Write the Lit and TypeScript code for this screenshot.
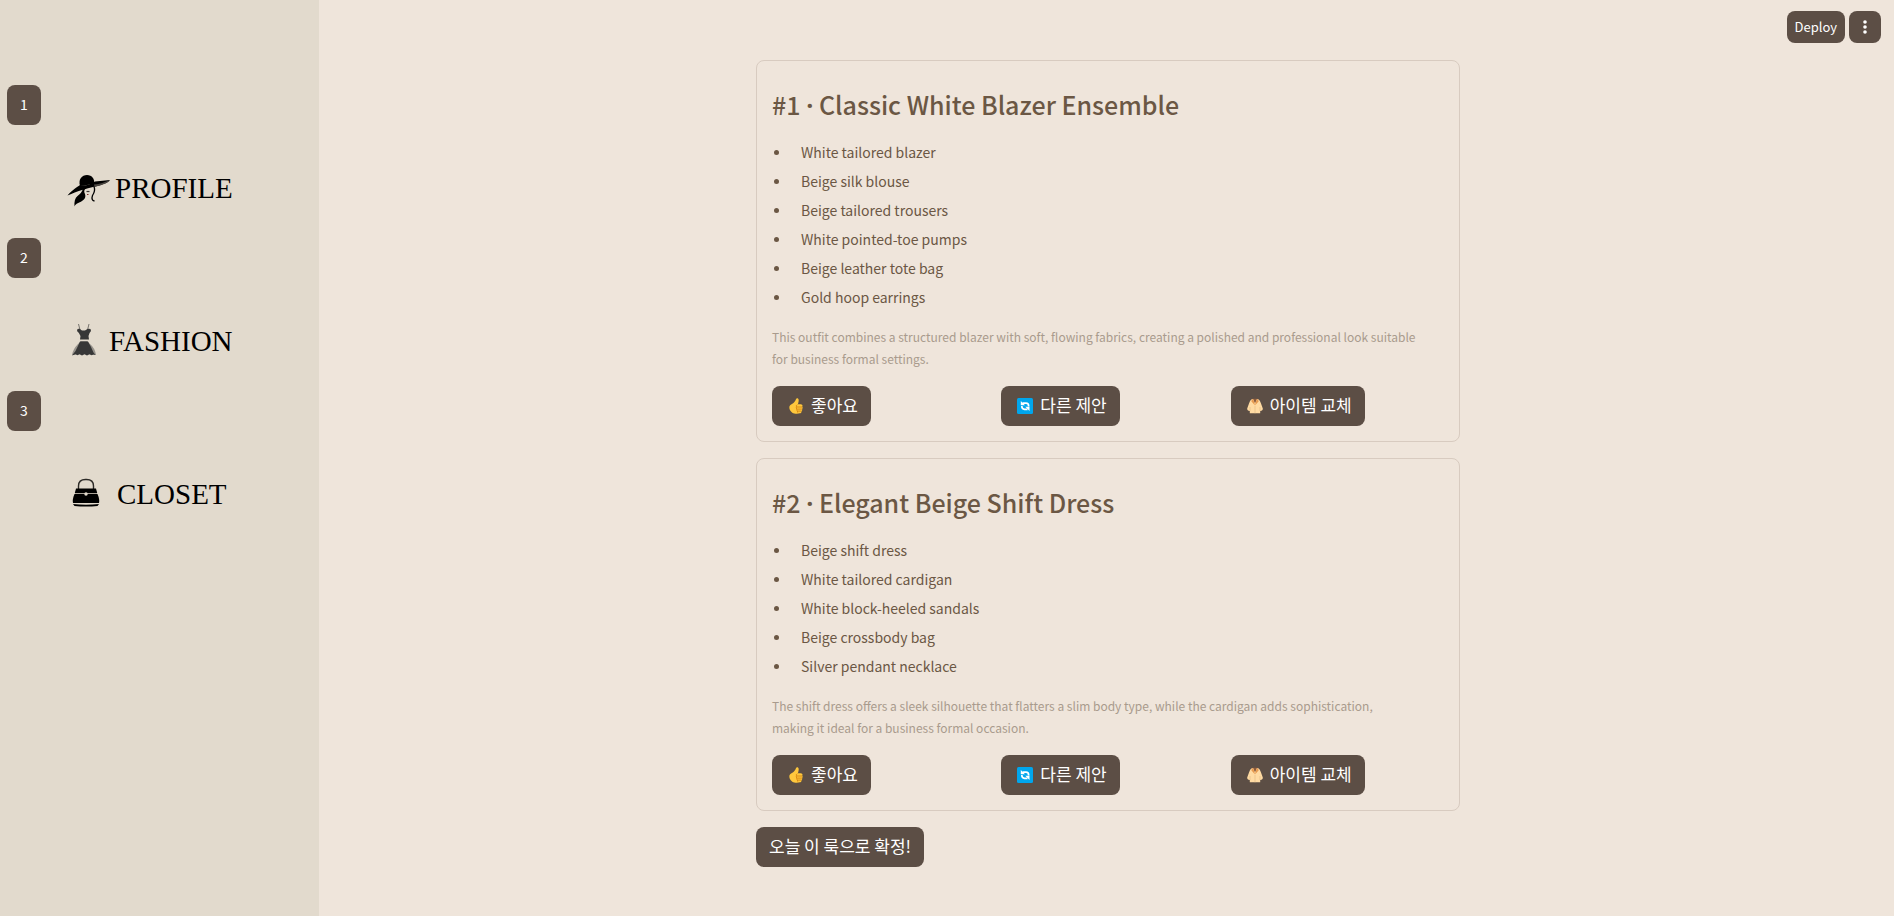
import { LitElement, html, css, svg } from "lit";
import { customElement, property } from "lit/decorators.js";

interface Outfit {
  rank: string;
  title: string;
  items: string[];
  note: string;
}

const outfits: Outfit[] = [
  {
    rank: "#1",
    title: "Classic White Blazer Ensemble",
    items: [
      "White tailored blazer",
      "Beige silk blouse",
      "Beige tailored trousers",
      "White pointed-toe pumps",
      "Beige leather tote bag",
      "Gold hoop earrings",
    ],
    note: "This outfit combines a structured blazer with soft, flowing fabrics, creating a polished and professional look suitable\nfor business formal settings.",
  },
  {
    rank: "#2",
    title: "Elegant Beige Shift Dress",
    items: [
      "Beige shift dress",
      "White tailored cardigan",
      "White block-heeled sandals",
      "Beige crossbody bag",
      "Silver pendant necklace",
    ],
    note: "The shift dress offers a sleek silhouette that flatters a slim body type, while the cardigan adds sophistication,\nmaking it ideal for a business formal occasion.",
  },
];

const hat = html`<svg width="44" height="34" viewBox="0 0 44 34" aria-hidden="true">
  ${svg`
  <path d="M13 12C11 5 15 1 20 1c5 0 8 4 7 9z" fill="#000"/>
  <path d="M0.500 21.500C5 16 11 12.500 13 11c4 1 10 0 15-3.500L43 6c-2 3-10 5.500-17 7-8 2-15 4-25.500 8.500z" fill="#000"/>
  <path d="M27 10.500C33 10 38 8 43 6.200c-3 3.300-9 5.500-15.500 6.500z" fill="#4b4641"/>
  <path d="M16 15c-1 3-3 5-5.500 7C8 24 7 28 7.500 32.500 9 29 12 29 15 27c3-2 4-4 3-7-1-2-1-3 0-5z" fill="#000"/>
  <path d="M27 12.500c1.500 4 .5 6-1.500 9-1 3-.5 5 2 5.500" fill="none" stroke="#000" stroke-width="1.300"/>
  <path d="M19.500 17.500h3" stroke="#3b3632" stroke-width="1.200"/>
  <path d="M20 20.500h1.500" stroke="#7d2f2c" stroke-width="1"/>`}
</svg>`;

const dress = html`<svg width="26" height="33" viewBox="0 0 26 33" aria-hidden="true">
  ${svg`
  <path d="M10 18L7 21Q2 26 1 32l7-1 9 0 8 1Q24 25 19 21l-3-3z" fill="#96928b"/>
  <path d="M7.500 1l1.500 6M18 1l-1.500 6" stroke="#77736d" stroke-width="1" fill="none"/>
  <path d="M6.500 6Q9 5 10 7q2.500 1 5 0 1.500-2 4.500-1l.5 2q-2 2-2.500 5l.5 3.500H9l.5-3.500Q8.500 10 6 8z" fill="#373737"/>
  <path d="M9 18.500h8q3 5 5.500 11L24.500 32l-2-.5-2 .8-2-1-2.500 1.200-2.500-1.200L11 32.500 8.500 31.300l-2 1-2-1L1 32.500 4.500 28Q7 23 9 18.500z" fill="#373737"/>`}
</svg>`;

const bag = html`<svg width="28" height="29" viewBox="0 0 28 29" aria-hidden="true">
  ${svg`
  <path d="M6.500 12V8q0-6.500 7-6.500h1q7 0 7 6.500v4" fill="none" stroke="#2c2a27" stroke-width="1.400"/>
  <path d="M4 10.500h20l1.200 4.500H2.800z" fill="#000"/>
  <path d="M2.500 16h23q2.500 6 1.500 9H1q-1-3 1.500-9z" fill="#000"/>
  <path d="M1 26q13 1.500 26 0l-1.500 2q-11.500 1-23 0z" fill="#000"/>
  <path d="M3 15.500h22" stroke="#aaa398" stroke-width="1"/>
  <circle cx="14" cy="16" r="1.700" fill="#e2dacd"/>`}
</svg>`;

const thumb = html`<svg class="emoji" viewBox="0 0 16 16" aria-hidden="true">
  ${svg`
  <path d="M8.200.8C8.600-.2 10.800.1 10.700 2.300 10.600 4 10.200 5 10 6.300h2.700c1.700 0 2.200 1.600 1.500 2.400.6.700.5 1.700-.1 2.200.4.900.1 1.700-.6 2.100.2 1.200-.5 2-1.700 2.300-2.200.6-5.500.6-7.500-.6C1.900 13.200.8 10.300 1.600 8 2.400 6.500 4.500 6 6 4.500 7 3.300 7.700 2.200 8.200.8z" fill="#ffc83d"/>
  <path d="M9.500 6.700Q7.600 7.400 8.500 8.900 7.700 10 8.900 11 8.300 12.200 9.500 13 9 14.300 10.300 14.900M9 9h5M9.200 11.100h4.700M9.700 13.100h3.600" fill="none" stroke="#d98a14" stroke-width="1"/>`}
</svg>`;

const refresh = html`<svg class="emoji" viewBox="0 0 16 16" aria-hidden="true">
  ${svg`
  <rect width="16" height="16" rx="1.500" fill="#00a6ed"/>
  <path d="M5.500 5.200H9q2.700 0 2.700 3.300M10.500 11.300H7.500q-2.700 0-2.700-3.300" fill="none" stroke="#fff" stroke-width="1.700"/>
  <path d="M3.800 3v4.200H8zM12.500 13V8.800H8.300z" fill="#fff"/>`}
</svg>`;

const coat = html`<svg class="emoji" viewBox="0 0 16 16" aria-hidden="true">
  ${svg`
  <path d="M5 1Q2.800 2 2 5.500L.2 10.500Q0 12.500 2.800 13V15.300h10.400V13q2.800-.5 2.600-2.500L14 5.500Q13.200 2 11 1z" fill="#ffdba3"/>
  <path d="M6 .8h4L8 5.500z" fill="#8c5b3c"/>
  <path d="M5.500.7L4.300 3.200 8 7.500 6.800 3zM10.500.7l1.200 2.500L8 7.500 9.200 3z" fill="#e79a4f"/>
  <path d="M8 8v7.300M3 9v4M13 9v4" stroke="#e3bd88" stroke-width=".7"/>`}
</svg>`;

const actions = [
  { icon: thumb, label: "좋아요" },
  { icon: refresh, label: "다른 제안" },
  { icon: coat, label: "아이템 교체" },
];

const pages = [
  { number: 1, name: "PROFILE", icon: hat, kind: "profile" },
  { number: 2, name: "FASHION", icon: dress, kind: "fashion" },
  { number: 3, name: "CLOSET", icon: bag, kind: "closet" },
];

const buttonStyles = css`
  button {
    font: inherit;
    font-size: 17px;
    line-height: 24px;
    color: #fff;
    background: #5c4e45;
    border: 0;
    border-radius: 8px;
    cursor: pointer;
  }
  button:hover {
    background: #6b5b50;
  }
`;

@customElement("side-nav")
class SideNav extends LitElement {
  static styles = [
    buttonStyles,
    css`
      :host {
        display: block;
        background: #e2dacd;
        padding: 85px 7px 0;
      }
      .page {
        height: 153px;
      }
      .number {
        display: block;
        width: 34px;
        height: 40px;
        padding: 0 0 2px;
        font-size: 14px;
      }
      .link {
        display: flex;
        align-items: center;
        height: 126px;
        padding-left: 60px;
        color: #000;
        text-decoration: none;
        font: 29px/32px "Liberation Serif", serif;
      }
      .profile {
        gap: 4px;
      }
      .profile svg {
        margin-top: 6px;
      }
      .fashion {
        gap: 12px;
        padding-left: 64px;
      }
      .closet {
        gap: 17px;
        padding-left: 65px;
      }
      .fashion svg,
      .closet svg {
        margin-bottom: 4px;
      }
    `,
  ];
  render() {
    return html`<nav>
      ${pages.map(
        (p) => html`<div class="page">
          <button class="number">${p.number}</button>
          <a class="link ${p.kind}" href="#${p.kind}">${p.icon}<span>${p.name}</span></a>
        </div>`
      )}
    </nav>`;
  }
}

@customElement("outfit-card")
class OutfitCard extends LitElement {
  @property({ attribute: false }) outfit!: Outfit;
  static styles = [
    buttonStyles,
    css`
      :host {
        display: block;
        border: 1px solid #d8cbc0;
        border-radius: 8px;
        padding: 15px;
      }
      h3 {
        margin: 0;
        padding: 10px 0 16px;
        font-size: 25px;
        line-height: 36px;
        font-weight: 500;
      }
      .dot {
        font-family: "Open Sans", sans-serif;
        font-weight: 700;
        line-height: 1;
      }
      ul {
        list-style: none;
        margin: 0;
        padding: 0;
      }
      li {
        display: flex;
        align-items: center;
        gap: 22px;
        padding-left: 2px;
        font-size: 14px;
        line-height: 29px;
      }
      li::before {
        content: "";
        width: 5px;
        height: 5px;
        border-radius: 50%;
        background: currentColor;
      }
      p {
        margin: 14px 0 16px;
        font-size: 12px;
        line-height: 22px;
        color: #a99b8d;
        white-space: pre-line;
      }
      .actions {
        display: grid;
        grid-template-columns: repeat(3, 1fr);
        gap: 16px;
        justify-items: start;
      }
      button {
        display: flex;
        align-items: center;
        gap: 7px;
        height: 40px;
        padding: 0 13px 2px 16px;
      }
      .emoji {
        width: 16px;
        height: 16px;
        margin-top: 2px;
      }
    `,
  ];
  render() {
    return html`
      <h3>${this.outfit.rank} <span class="dot">·</span> ${this.outfit.title}</h3>
      <ul>
        ${this.outfit.items.map((i) => html`<li>${i}</li>`)}
      </ul>
      <p>${this.outfit.note}</p>
      <div class="actions">
        ${actions.map((a) => html`<button>${a.icon}<span>${a.label}</span></button>`)}
      </div>
    `;
  }
}

@customElement("app-root")
class AppRoot extends LitElement {
  static styles = [
    buttonStyles,
    css`
      :host {
        display: grid;
        grid-template-columns: 319px 1fr;
        min-height: 100vh;
        background: #efe5db;
        color: #6b5744;
        font-family: "Noto Sans CJK KR", sans-serif;
      }
      header {
        display: flex;
        justify-content: flex-end;
        align-items: flex-start;
        gap: 4px;
        height: 49px;
        padding: 11px 13px 0;
      }
      header button {
        height: 32px;
        padding: 0 8px;
        font-size: 13px;
      }
      .menu {
        display: grid;
        place-items: center;
        width: 32px;
      }
      main {
        display: flex;
        flex-direction: column;
        align-items: flex-start;
        gap: 16px;
        max-width: 704px;
        margin: 0 auto;
      }
      .content {
        padding-left: 3px;
      }
      outfit-card {
        align-self: stretch;
      }
      .confirm {
        height: 40px;
        padding: 0 13px 2px;
      }
    `,
  ];
  render() {
    return html`
      <side-nav></side-nav>
      <div>
        <header>
          <button>Deploy</button>
          <button class="menu" aria-label="Menu">
            <svg width="4" height="14" viewBox="0 0 4 14" fill="#fff">
              <circle cx="2" cy="2" r="1.800" />
              <circle cx="2" cy="7" r="1.800" />
              <circle cx="2" cy="12" r="1.800" />
            </svg>
          </button>
        </header>
        <div class="content">
          <main>
            ${outfits.map((o) => html`<outfit-card .outfit=${o}></outfit-card>`)}
            <button class="confirm">오늘 이 룩으로 확정!</button>
          </main>
        </div>
      </div>
    `;
  }
}
